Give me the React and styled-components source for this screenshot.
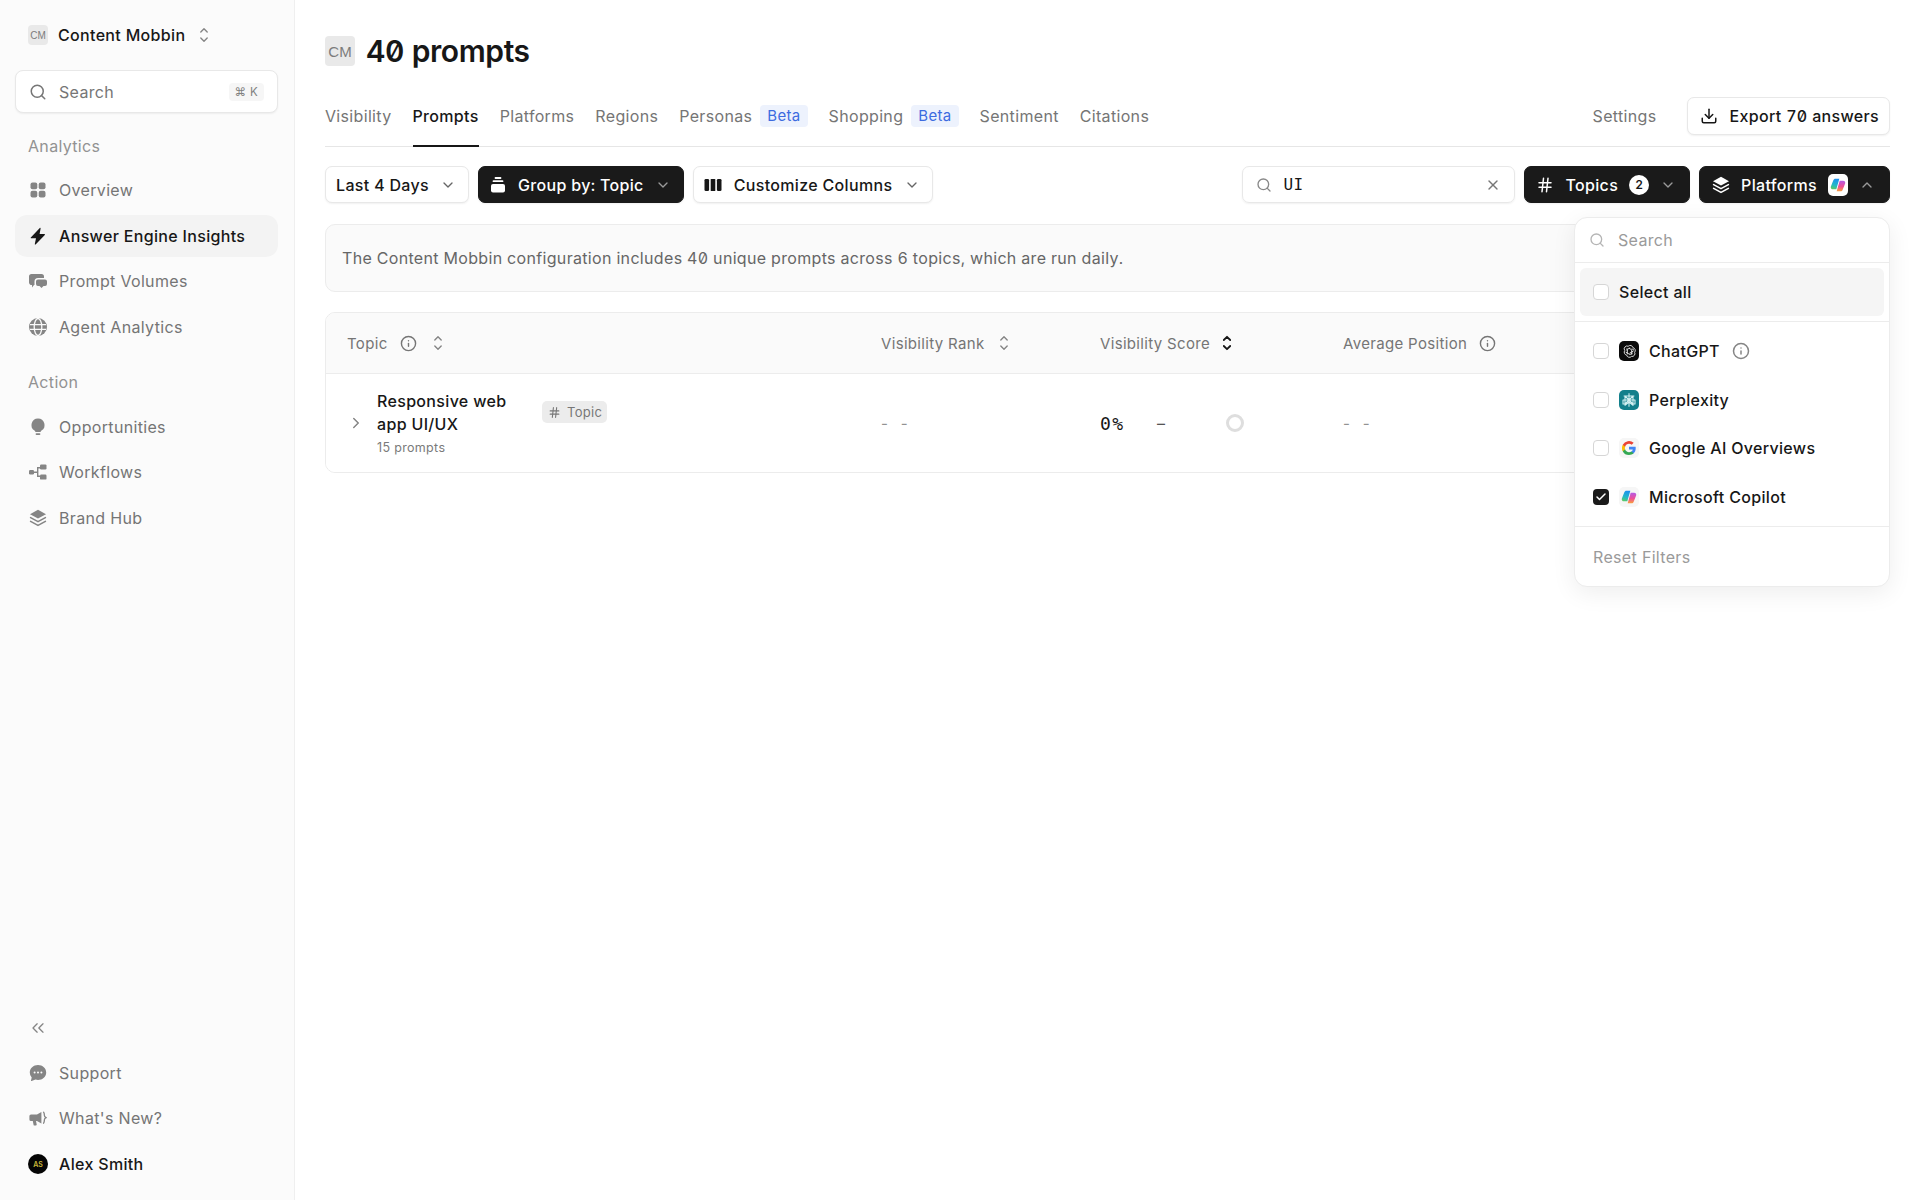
import React from 'react';
import styled, { createGlobalStyle } from 'styled-components';
import { ChevronDown, ChevronUp, ChevronRight, ChevronsLeft, Search, X, Hash, Info, Download, Check } from 'lucide-react';

const GlobalStyle = createGlobalStyle`
  html, body { margin: 0; padding: 0; height: 100%; background: #fff; }
  body {
    font-family: Inter, 'Noto Sans', sans-serif;
    font-size: 16px;
    letter-spacing: .33px;
    color: #171717;
    -webkit-font-smoothing: antialiased;
  }
  * { box-sizing: border-box; }
`;

const Page = styled.div`
  display: flex;
  width: 100%;
  height: 1200px;
  overflow: hidden;
`;

const Sidebar = styled.aside`
  flex: 0 0 295px;
  display: flex;
  flex-direction: column;
  padding: 0 16px 0 15px;
  background: #fbfbfb;
  border-right: 1px solid #efefef;
`;

const Brand = styled.div`
  display: flex;
  align-items: center;
  gap: 10px;
  height: 70px;
  padding-left: 13px;
  font-weight: 500;
  color: #171717;
`;

const Initials = styled.span`
  display: inline-flex;
  align-items: center;
  justify-content: center;
  flex: none;
  width: ${p => p.$size}px;
  height: ${p => p.$size}px;
  border-radius: 4px;
  background: #e9e9e9;
  color: #7c7c7c;
  font-size: ${p => p.$font}px;
  letter-spacing: 0;
  font-family: 'Liberation Sans', sans-serif;
`;

const SideSearch = styled.div`
  display: flex;
  align-items: center;
  height: 43px;
  padding: 0 13px;
  gap: 12px;
  background: #fff;
  border: 1px solid #e8e8e8;
  border-radius: 8px;
  box-shadow: 0 1px 2px rgba(0, 0, 0, .06);
  color: #767676;
  font-size: 16px;
`;

const Kbd = styled.span`
  margin-left: auto;
  padding: 2px 6px;
  border-radius: 4px;
  background: #f6f6f6;
  color: #808080;
  font-size: 11.5px;
`;

const SectionLabel = styled.div`
  height: 46px;
  display: flex;
  align-items: center;
  padding-left: 13px;
  margin-top: ${p => p.$gap}px;
  margin-bottom: ${p => p.$after || 0}px;
  color: #929292;
  font-size: 16px;
`;

const NavItem = styled.div`
  display: flex;
  align-items: center;
  gap: 12px;
  height: 42px;
  margin-bottom: 3.7px;
  padding-left: 14px;
  border-radius: 12px;
  font-weight: ${p => (p.$active ? 500 : 400)};
  font-size: 16px;
  color: ${p => (p.$active ? '#171717' : '#757575')};
  background: ${p => (p.$active ? '#f3f3f3' : 'transparent')};
`;

const ProfileItem = styled(NavItem)`
  margin-bottom: 15px;
  font-weight: 500;
  color: #171717;
`;

const NavIcon = styled.svg`
  flex: none;
  width: 18px;
  height: 18px;
  color: ${p => p.$tone || '#858585'};
  fill: currentColor;
`;

const Spacer = styled.div`
  flex: 1;
`;

const Collapse = styled.div`
  display: flex;
  align-items: center;
  height: 42px;
  margin-bottom: 2.7px;
  padding-left: 13px;
  color: #858585;
`;

const Avatar = styled.span`
  display: inline-flex;
  align-items: center;
  justify-content: center;
  flex: none;
  width: 20px;
  height: 20px;
  margin-left: -1px;
  margin-right: -1px;
  border-radius: 50%;
  background: #050505;
  color: #c9b93a;
  font-size: 7px;
  font-weight: 600;
  letter-spacing: 0;
`;

const SortGlyph = styled.svg`
  flex: none;
  width: 10px;
  height: 16px;
  fill: none;
  stroke: ${p => p.$tone || '#858585'};
  stroke-width: ${p => p.$weight || 1.4};
  stroke-linecap: round;
  stroke-linejoin: round;
  margin-left: ${p => p.$ml || 0}px;
`;

const Main = styled.main`
  flex: 1;
  min-width: 0;
  padding: 0 30px;
`;

const TitleRow = styled.div`
  display: flex;
  align-items: center;
  gap: 11px;
  height: 102px;
`;

const Title = styled.h1`
  margin: 0;
  font-size: 30px;
  font-weight: 600;
  letter-spacing: -.4px;
  color: #171717;
  font-feature-settings: 'zero', 'tnum';
`;

const TabBar = styled.div`
  display: flex;
  align-items: center;
  height: 45px;
  border-bottom: 1px solid #e6e6e6;
`;

const Tab = styled.div`
  display: flex;
  align-items: center;
  gap: 8px;
  height: 45px;
  margin-right: 21px;
  color: ${p => (p.$active ? '#171717' : '#757575')};
  font-weight: ${p => (p.$active ? 500 : 400)};
  font-size: 16px;
  border-bottom: 2px solid ${p => (p.$active ? '#171717' : 'transparent')};
  margin-bottom: -1px;
  padding-bottom: 16px;
`;

const BetaTag = styled.span`
  padding: 1px 7px;
  border-radius: 4px;
  background: #edf2fd;
  color: #3d6be0;
  font-size: 15px;
  line-height: 20px;
`;

const TabActions = styled.div`
  display: flex;
  align-items: center;
  gap: 30px;
  margin-left: auto;
  margin-bottom: 16px;
`;

const SettingsLink = styled.span`
  color: #757575;
`;

const Button = styled.div`
  display: flex;
  align-items: center;
  height: ${p => p.$height || 37}px;
  padding: 0 ${p => p.$pr || 12}px 0 ${p => p.$pl || 11}px;
  gap: ${p => p.$gap || 12}px;
  border-radius: 7px;
  font-size: 16px;
  font-weight: 500;
  white-space: nowrap;
  font-feature-settings: 'zero', 'tnum';
  background: ${p => (p.$dark ? '#1a1a1a' : '#fff')};
  color: ${p => (p.$dark ? '#fff' : '#171717')};
  border: 1px solid ${p => (p.$dark ? '#1a1a1a' : '#e8e8e8')};
  box-shadow: 0 1px 2px rgba(0, 0, 0, .06);

  svg.chev {
    color: ${p => (p.$dark ? '#9a9a9a' : '#666')};
  }
`;

const Toolbar = styled.div`
  display: flex;
  align-items: center;
  gap: 9px;
  margin-top: 19px;
`;

const ToolSearch = styled.div`
  display: flex;
  align-items: center;
  gap: 11px;
  width: 273px;
  height: 37px;
  margin-left: auto;
  padding: 0 13px;
  border: 1px solid #e8e8e8;
  border-radius: 7px;
  box-shadow: 0 1px 2px rgba(0, 0, 0, .06);
  font-weight: 500;
  font-family: 'DejaVu Sans Mono', monospace;
  font-size: 16px;
  color: #171717;

  svg:last-child {
    margin-left: auto;
    color: #777;
  }
`;

const CountBadge = styled.span`
  display: inline-flex;
  align-items: center;
  justify-content: center;
  width: 20px;
  height: 20px;
  border-radius: 50%;
  background: #fff;
  color: #171717;
  font-size: 12px;
  font-weight: 600;
  letter-spacing: 0;
`;

const LogoChip = styled.span`
  display: inline-flex;
  align-items: center;
  justify-content: center;
  flex: none;
  width: 20px;
  height: ${p => (p.$tall ? 22 : 20)}px;
  border-radius: 5px;
  background: ${p => p.$bg || '#f6f6f6'};
`;

const PlatformWrap = styled.div`
  position: relative;
`;

const Dropdown = styled.div`
  position: absolute;
  z-index: 5;
  top: 51px;
  right: 0;
  width: 316px;
  height: 370px;
  background: #fff;
  border: 1px solid #ececec;
  border-radius: 13px;
  box-shadow: 0 6px 24px rgba(0, 0, 0, .07);
  font-weight: 400;
`;

const DropSearch = styled.div`
  display: flex;
  align-items: center;
  gap: 13px;
  height: 45px;
  padding: 0 14px;
  border-bottom: 1px solid #ececec;
  color: #9a9a9a;
`;

const SelectAllWrap = styled.div`
  padding: 5px 5px;
  border-bottom: 1px solid #ececec;
`;

const SelectAll = styled.div`
  display: flex;
  align-items: center;
  gap: 10px;
  height: 48px;
  padding-left: 13px;
  border-radius: 6px;
  background: #f5f5f5;
  font-weight: 500;
  font-size: 16px;
`;

const OptionList = styled.div`
  padding: 5px 0;
  border-bottom: 1px solid #ececec;
`;

const Option = styled.div`
  display: flex;
  align-items: center;
  height: 48.5px;
  padding-left: 18px;
  gap: 10px;
  font-weight: 500;
  color: #171717;
`;

const Box = styled.span`
  display: inline-flex;
  align-items: center;
  justify-content: center;
  flex: none;
  width: 16px;
  height: 16px;
  border-radius: 4px;
  border: ${p => (p.$checked ? 'none' : '1.5px solid #d6d6d6')};
  background: ${p => (p.$checked ? '#1a1a1a' : '#fff')};
  color: #fff;
`;

const InfoIcon = styled(Info)`
  color: #858585;
  margin-left: 2px;
`;

const ResetLink = styled.div`
  display: flex;
  align-items: center;
  height: 59px;
  padding-left: 18px;
  color: #9a9a9a;
`;

const Notice = styled.div`
  display: flex;
  align-items: center;
  height: 68px;
  margin-top: 21px;
  padding-left: 16px;
  border: 1px solid #ececec;
  border-radius: 10px;
  background: #fafafa;
  color: #666;
  font-size: 16px;
  font-feature-settings: 'zero', 'tnum';
`;

const TableCard = styled.div`
  margin-top: 20px;
  border: 1px solid #ececec;
  border-radius: 10px;
  overflow: hidden;
`;

const columns = '534px 219px 243px 1fr';

const HeadRow = styled.div`
  display: grid;
  grid-template-columns: ${columns};
  align-items: center;
  height: 61px;
  padding-left: 21px;
  background: #fafafa;
  border-bottom: 1px solid #ececec;
  color: #757575;
  font-size: 15px;
`;

const HeadCell = styled.div`
  display: flex;
  align-items: center;
  gap: 12px;
`;

const BodyRow = styled.div`
  display: grid;
  grid-template-columns: ${columns};
  align-items: center;
  height: 98px;
  padding-left: 21px;
  background: #fff;
`;

const TopicCell = styled.div`
  display: flex;
  align-items: center;
  color: #858585;
`;

const TopicText = styled.div`
  width: 135px;
  margin: 0 30px 0 12px;
  font-weight: 500;
  color: #171717;
  font-size: 16px;
  line-height: 23px;
`;

const PromptCount = styled.div`
  margin-top: 3px;
  font-size: 12.5px;
  line-height: 18px;
  font-weight: 400;
  color: #7a7a7a;
`;

const TopicTag = styled.span`
  display: inline-flex;
  align-items: center;
  gap: 6px;
  height: 22px;
  padding: 0 5px 0 6px;
  margin-bottom: 22px;
  border-radius: 5px;
  background: #ececec;
  color: #777;
  font-size: 13px;
`;

const Dashes = styled.div`
  color: #929292;
  font-size: 15px;
  word-spacing: 8px;
`;

const ScoreCell = styled.div`
  display: flex;
  align-items: center;
`;

const Score = styled.span`
  width: 57px;
  font-family: 'DejaVu Sans Mono', monospace;
  font-size: 18px;
  letter-spacing: 1.5px;
  font-weight: 500;
  color: #171717;
`;

const Delta = styled.span`
  width: 20px;
  margin-right: 49px;
  color: #555;
`;

const Ring = styled.span`
  width: 18px;
  height: 18px;
  border: 3px solid #dedede;
  border-radius: 50%;
`;

const icons = {
  overview: (
    <>
      <rect x="1.5" y="1.5" width="6.8" height="6.8" rx="2" />
      <rect x="9.7" y="1.5" width="6.8" height="6.8" rx="2" />
      <rect x="1.5" y="9.7" width="6.8" height="6.8" rx="2" />
      <rect x="9.7" y="9.7" width="6.8" height="6.8" rx="2" />
    </>
  ),
  bolt: <path d="M10.8 1 1.8 10.4c-.3.4 0 .9.4.9h4.8L5.8 17c-.1.5.5.8.8.4l9.2-9.5c.3-.4 0-.9-.4-.9h-4.8l1-5.6c.1-.5-.5-.8-.8-.4Z" />,
  volumes: (
    <>
      <path d="M2.5 2h10A2.5 2.5 0 0 1 15 4.5V6H9a3.5 3.5 0 0 0-3.5 3.5V13H5l-2 2.5V12.9A2.5 2.5 0 0 1 0 10.5v-6A2.5 2.5 0 0 1 2.5 2Z" />
      <path d="M9 7.5h7a2 2 0 0 1 2 2V12a2 2 0 0 1-2 2h-1.5L12.5 16l-2-2H9a2 2 0 0 1-2-2V9.5a2 2 0 0 1 2-2Z" />
    </>
  ),
  globe: (
    <>
      <circle cx="9" cy="9" r="9" />
      <g fill="none" stroke="#fbfbfb" strokeWidth="1.3">
        <ellipse cx="9" cy="9" rx="3.8" ry="8.5" />
        <path d="M1 6.6h16M1 11.4h16" />
      </g>
    </>
  ),
  bulb: (
    <>
      <path d="M9 .5a6.5 6.5 0 0 0-3.5 12c.6.4.9 1 .9 1.6h5.2c0-.6.3-1.2.9-1.6A6.5 6.5 0 0 0 9 .5Z" />
      <rect x="6.6" y="15.2" width="4.8" height="1.8" rx=".9" />
    </>
  ),
  workflows: (
    <>
      <rect x="0" y="7" width="5" height="4.4" rx="1.2" />
      <rect x="11" y="1.4" width="6.5" height="5" rx="1.2" />
      <rect x="11" y="11.6" width="6.5" height="5" rx="1.2" />
      <path d="M5 8.6h3V4h3v1.4H9.4v7.2H11V14H8V10H5Z" />
    </>
  ),
  layers: (
    <>
      <path d="M9 .8 17 5.2 9 9.6 1 5.2Z" />
      <path d="m1.6 8.6 7.4 4 7.4-4" fill="none" stroke="currentColor" strokeWidth="1.6" strokeLinecap="round" strokeLinejoin="round" />
      <path d="m1.6 12.4 7.4 4 7.4-4" fill="none" stroke="currentColor" strokeWidth="1.6" strokeLinecap="round" strokeLinejoin="round" />
    </>
  ),
  support: (
    <>
      <path d="M9 1c4.6 0 8.2 3.3 8.2 7.5S13.6 16 9 16c-.9 0-1.7-.1-2.5-.4L2.6 17c-.4.1-.7-.2-.6-.6l.7-2.8A7.2 7.2 0 0 1 .8 8.5C.8 4.3 4.4 1 9 1Z" />
      <g fill="#fbfbfb">
        <circle cx="5.6" cy="8.5" r="1" />
        <circle cx="9" cy="8.5" r="1" />
        <circle cx="12.4" cy="8.5" r="1" />
      </g>
    </>
  ),
  megaphone: (
    <>
      <path d="M2 5.4h6L12.4 3v11.4L8 12H7l.7 3.6c.1.5-.3.9-.8.9H5.4c-.4 0-.7-.3-.8-.6L3.8 12H2A1.6 1.6 0 0 1 .4 10.4V7A1.6 1.6 0 0 1 2 5.4Z" />
      <path d="M14.6 3.2c.8 1 .8 2.6.8 3.4 0 .8.6 1.6 1.6 2.1-1 .5-1.6 1.3-1.6 2.1 0 .8 0 2.4-.8 3.4" fill="none" stroke="currentColor" strokeWidth="1.3" strokeLinecap="round" />
    </>
  ),
  stack: (
    <>
      <path d="M6.5 2h5M4.5 5.2h9" fill="none" stroke="currentColor" strokeWidth="1.8" strokeLinecap="round" />
      <rect x="2" y="8" width="14" height="8.5" rx="2" />
    </>
  ),
  columns: (
    <>
      <rect x="0.5" y="3" width="4.6" height="12" rx="1.3" />
      <rect x="6.7" y="3" width="4.6" height="12" rx=".6" />
      <rect x="12.9" y="3" width="4.6" height="12" rx="1.3" />
    </>
  ),
};

const Glyph = ({ name, tone }) => (
  <NavIcon viewBox="0 0 18 18" $tone={tone}>{icons[name]}</NavIcon>
);

const SortIcon = ({ tone, weight, ml }) => (
  <SortGlyph viewBox="0 0 10 16" $tone={tone} $weight={weight} $ml={ml}>
    <path d="M1.8 5 5 1.8 8.2 5" />
    <path d="M1.8 11 5 14.2 8.2 11" />
  </SortGlyph>
);

const ChatGptLogo = () => (
  <svg width="15" height="15" viewBox="0 0 24 24" fill="none" stroke="#e4e4e4" strokeWidth="1.5">
    <path d="M10 3.5a4.6 4.6 0 0 1 7.6 2.4 4.6 4.6 0 0 1 2.6 7.4 4.6 4.6 0 0 1-5 6.6 4.6 4.6 0 0 1-7.8-2.2 4.6 4.6 0 0 1-3-7.2 4.6 4.6 0 0 1 5.6-6.9Z" />
    <path d="M8.5 16.5V8.6L13 6M15.5 7.5l3.5 2M15.5 17V9.2L11 6.7M8 6.8l-.1 3.7M6 13l6.7 3.9 4.2-2.4M12 14.8l6.5-3.8" />
  </svg>
);

const PerplexityLogo = () => (
  <svg width="16" height="16" viewBox="0 0 24 24" fill="none" stroke="#d5f1f3" strokeWidth="1.6" strokeLinejoin="round">
    <path d="M12 2v20M4 6h16M6 6l6 6 6-6M6 18l6-6 6 6M6 6v6H3v6h3M18 6v6h3v6h-3M6 12h12M6 12v8l6-5 6 5v-8" />
  </svg>
);

const GoogleLogo = () => (
  <svg width="14" height="14" viewBox="0 0 24 24">
    <path fill="#4285F4" d="M23.5 12.3c0-.8-.1-1.6-.2-2.3H12v4.5h6.5a5.5 5.5 0 0 1-2.4 3.6v3h3.9c2.3-2.1 3.5-5.2 3.5-8.8Z" />
    <path fill="#34A853" d="M12 24c3.2 0 6-1.1 8-2.9l-3.9-3c-1.1.7-2.5 1.2-4.1 1.2-3.1 0-5.8-2.1-6.7-5H1.3v3.1A12 12 0 0 0 12 24Z" />
    <path fill="#FBBC05" d="M5.3 14.3a7.2 7.2 0 0 1 0-4.6V6.6h-4a12 12 0 0 0 0 10.8l4-3.1Z" />
    <path fill="#EA4335" d="M12 4.8c1.8 0 3.3.6 4.6 1.8l3.4-3.4A12 12 0 0 0 1.3 6.6l4 3.1c.9-2.8 3.6-4.9 6.7-4.9Z" />
  </svg>
);

const CopilotLogo = ({ size = 16 }) => (
  <svg width={size} height={size} viewBox="0 0 24 24">
    <defs>
      <linearGradient id="copilotLeft" x1="0.6" y1="0" x2="0.3" y2="1">
        <stop offset="0" stopColor="#1c8ff0" />
        <stop offset=".6" stopColor="#22b8c8" />
        <stop offset="1" stopColor="#5ccb62" />
      </linearGradient>
      <linearGradient id="copilotRight" x1="0.5" y1="0" x2="0.5" y2="1">
        <stop offset="0" stopColor="#b35be8" />
        <stop offset=".55" stopColor="#ee4f96" />
        <stop offset="1" stopColor="#f9a13a" />
      </linearGradient>
    </defs>
    <path fill="url(#copilotLeft)" d="M8 2.5h6l-4.5 16h-5c-2.5 0-4-2-3.200-4.300L5 5c.5-1.500 1.700-2.500 3-2.500Z" />
    <path fill="url(#copilotRight)" d="M16 21.500h-6l4.500-16h5c2.500 0 4 2 3.200 4.300L19 19c-.5 1.500-1.700 2.500-3 2.500Z" />
  </svg>
);

const topNav = [
  { name: 'overview', label: 'Overview' },
  { name: 'bolt', label: 'Answer Engine Insights', active: true },
  { name: 'volumes', label: 'Prompt Volumes' },
  { name: 'globe', label: 'Agent Analytics' },
];

const actionNav = [
  { name: 'bulb', label: 'Opportunities' },
  { name: 'workflows', label: 'Workflows' },
  { name: 'layers', label: 'Brand Hub' },
];

const tabs = [
  { label: 'Visibility' },
  { label: 'Prompts', active: true },
  { label: 'Platforms' },
  { label: 'Regions' },
  { label: 'Personas', beta: true },
  { label: 'Shopping', beta: true },
  { label: 'Sentiment' },
  { label: 'Citations' },
];

const platforms = [
  { label: 'ChatGPT', bg: '#0a0a0a', logo: <ChatGptLogo />, info: true },
  { label: 'Perplexity', bg: '#13808c', logo: <PerplexityLogo /> },
  { label: 'Google AI Overviews', logo: <GoogleLogo /> },
  { label: 'Microsoft Copilot', logo: <CopilotLogo />, checked: true },
];

const NavList = ({ items }) => items.map(item => (
  <NavItem key={item.label} $active={item.active}>
    <Glyph name={item.name} tone={item.active ? '#171717' : undefined} />
    {item.label}
  </NavItem>
));

export default function App() {
  return (
    <>
      <GlobalStyle />
      <Page>
        <Sidebar>
          <Brand>
            <Initials $size={20} $font={10}>CM</Initials>
            Content Mobbin
            <SortIcon ml={4} />
          </Brand>
          <SideSearch>
            <Search size={18} />
            Search
            <Kbd>⌘ K</Kbd>
          </SideSearch>
          <SectionLabel $gap={10}>Analytics</SectionLabel>
          <NavList items={topNav} />
          <SectionLabel $gap={7} $after={1}>Action</SectionLabel>
          <NavList items={actionNav} />
          <Spacer />
          <Collapse><ChevronsLeft size={20} strokeWidth={1.6} /></Collapse>
          <NavItem><Glyph name="support" />Support</NavItem>
          <NavItem><Glyph name="megaphone" />What's New?</NavItem>
          <ProfileItem>
            <Avatar>AS</Avatar>
            Alex Smith
          </ProfileItem>
        </Sidebar>
        <Main>
          <TitleRow>
            <Initials $size={30} $font={15}>CM</Initials>
            <Title>40 prompts</Title>
          </TitleRow>
          <TabBar>
            {tabs.map(tab => (
              <Tab key={tab.label} $active={tab.active}>
                {tab.label}
                {tab.beta && <BetaTag>Beta</BetaTag>}
              </Tab>
            ))}
            <TabActions>
              <SettingsLink>Settings</SettingsLink>
              <Button $height={38} $gap={12} $pl={12} $pr={10}>
                <Download size={18} />
                Export 70 answers
              </Button>
            </TabActions>
          </TabBar>
          <Toolbar>
            <Button $gap={11} $pl={10}>Last 4 Days<ChevronDown className="chev" size={16} /></Button>
            <Button $dark $gap={11} $pl={10}>
              <Glyph name="stack" tone="#fff" />
              Group by: Topic
              <ChevronDown className="chev" size={16} />
            </Button>
            <Button $pl={10}>
              <Glyph name="columns" tone="#171717" />
              Customize Columns
              <ChevronDown className="chev" size={16} />
            </Button>
            <ToolSearch>
              <Search size={16} color="#888" />
              UI
              <X size={16} />
            </ToolSearch>
            <Button $dark $gap={11} $pl={11} $pr={13}>
              <Hash size={18} />
              Topics
              <CountBadge>2</CountBadge>
              <ChevronDown className="chev" size={16} />
            </Button>
            <PlatformWrap>
              <Button $dark $gap={11} $pl={12} $pr={14}>
                <Glyph name="layers" tone="#fff" />
                Platforms
                <LogoChip $bg="#fff" $tall><CopilotLogo /></LogoChip>
                <ChevronUp className="chev" size={16} />
              </Button>
              <Dropdown>
                <DropSearch><Search size={16} color="#b5b5b5" />Search</DropSearch>
                <SelectAllWrap>
                  <SelectAll><Box />Select all</SelectAll>
                </SelectAllWrap>
                <OptionList>
                  {platforms.map(p => (
                    <Option key={p.label}>
                      <Box $checked={p.checked}>
                        {p.checked && <Check size={12} strokeWidth={3} />}
                      </Box>
                      <LogoChip $bg={p.bg}>{p.logo}</LogoChip>
                      {p.label}
                      {p.info && <InfoIcon size={18} />}
                    </Option>
                  ))}
                </OptionList>
                <ResetLink>Reset Filters</ResetLink>
              </Dropdown>
            </PlatformWrap>
          </Toolbar>
          <Notice>The Content Mobbin configuration includes 40 unique prompts across 6 topics, which are run daily.</Notice>
          <TableCard>
            <HeadRow>
              <HeadCell>Topic<Info size={17} /><SortIcon ml={4} /></HeadCell>
              <HeadCell>Visibility Rank<SortIcon ml={2} /></HeadCell>
              <HeadCell>Visibility Score<SortIcon tone="#171717" weight={1.8} /></HeadCell>
              <HeadCell>Average Position<Info size={17} /></HeadCell>
            </HeadRow>
            <BodyRow>
              <TopicCell>
                <ChevronRight size={18} />
                <TopicText>
                  Responsive web app UI/UX
                  <PromptCount>15 prompts</PromptCount>
                </TopicText>
                <TopicTag><Hash size={13} />Topic</TopicTag>
              </TopicCell>
              <Dashes>- -</Dashes>
              <ScoreCell>
                <Score>0%</Score>
                <Delta>–</Delta>
                <Ring />
              </ScoreCell>
              <Dashes>- -</Dashes>
            </BodyRow>
          </TableCard>
        </Main>
      </Page>
    </>
  );
}
